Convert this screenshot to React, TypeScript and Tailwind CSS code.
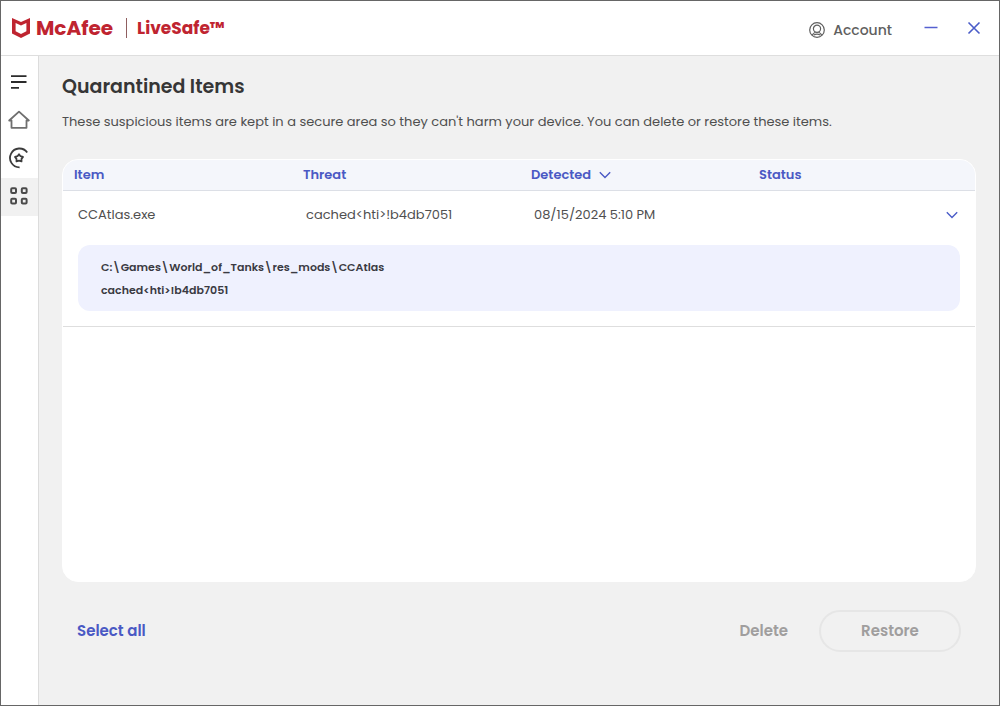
import { useState } from 'react';

const items = [
    {
        name: 'CCAtlas.exe',
        threat: 'cached<hti>!b4db7051',
        detected: '08/15/2024 5:10 PM',
        status: '',
        path: 'C:\\Games\\World_of_Tanks\\res_mods\\CCAtlas',
    },
];

const Chevron = () => (
    <svg viewBox="0 0 12 8" className="w-3 h-2" fill="none" stroke="currentColor" strokeWidth="1.4" aria-hidden="true">
        <path d="M0.8 1.2 L6 6.4 L11.2 1.2" />
    </svg>
)

const TitleBar = () => {
    return (
        <header className="flex h-[55px] items-center justify-between border-b border-[#dedede] bg-white pl-[11px] pr-[17px]">
            <div className="flex items-center text-[#bf2430]">
                <svg viewBox="0 0 18 20" className="h-5 w-[18px]" fill="currentColor" aria-hidden="true">
                    <path fillRule="evenodd" d="M0 0 L9 4 L18 0 V15.5 L9 20 L0 15.5 Z M3.6 5 V13.3 L9 16 L14.4 13.3 V5 L9 7.6 Z" />
                </svg>
                <span className="ml-1.5 text-xl font-bold leading-6">McAfee</span>
                <span className="ml-[13px] h-5 w-px bg-[#8f5f60]"></span>
                <span className="ml-2.5 text-[17px] font-bold leading-6">LiveSafe™</span>
            </div>

            <div className="flex items-center">
                <button className="mt-1 flex items-center gap-2 text-sm font-medium text-[#5f5f5f]">
                    <svg viewBox="0 0 16 16" className="size-4" fill="none" stroke="currentColor" strokeWidth="1.2" aria-hidden="true">
                        <circle cx="8" cy="8" r="7.3" />
                        <circle cx="8" cy="6.8" r="3.6" />
                        <path d="M3.2 13.3 C4 11.2 5.4 10.6 6.4 10.2 M12.8 13.3 C12 11.2 10.6 10.6 9.6 10.2 M4.8 13 C6.8 11.8 9.2 11.8 11.2 13" />
                    </svg>
                    Account
                </button>
                <button aria-label="Minimize" className="ml-8 text-[#5560d0]">
                    <svg viewBox="0 0 14 14" className="size-3.5" stroke="currentColor" strokeWidth="1.5">
                        <path d="M0.5 6.5 H13.5" />
                    </svg>
                </button>
                <button aria-label="Close" className="ml-7 text-[#4a5cc8]">
                    <svg viewBox="0 0 16 16" className="size-4" stroke="currentColor" strokeWidth="1.6">
                        <path d="M2.5 2.5 L13.5 13.5 M13.5 2.5 L2.5 13.5" />
                    </svg>
                </button>
            </div>
        </header>
    )
}

const SideBar = () => {
    const button = 'flex h-[38px] w-full items-center justify-center pb-0.5 pr-0.5';

    return (
        <nav className="flex w-[38px] shrink-0 flex-col border-r border-[#dcdcdc] bg-white pt-2">
            <button aria-label="Menu" className={button}>
                <svg viewBox="0 0 16 14" className="h-3.5 w-4" stroke="#2b2b2b" strokeWidth="1.8">
                    <path d="M0 1.2 H15.5 M0 7 H15.5 M0 12.8 H8" />
                </svg>
            </button>
            <button aria-label="Home" className={button}>
                <svg viewBox="0 0 22 20" className="h-5 w-[22px]" fill="none" stroke="#6f6f6f" strokeWidth="1.8">
                    <path d="M3.5 10.5 H1.2 L11 1.6 L20.8 10.5 H18.5 V17.8 H3.5 Z" strokeLinejoin="round" />
                </svg>
            </button>
            <button aria-label="My Protection" className={button}>
                <svg viewBox="0 0 22 22" className="size-[22px]" fill="none" stroke="#3c3c3c" strokeWidth="1.8">
                    <path d="M19.2 5.6 A9.4 9.4 0 1 0 11.6 20.3" />
                    <path d="M11 7.2 L12.5 9.2 L15 9.9 L13.5 11.9 L13.5 14.4 L11 13.6 L8.5 14.4 L8.5 11.9 L7 9.9 L9.5 9.2 Z" strokeLinejoin="round" />
                </svg>
            </button>
            <button aria-label="My Apps" aria-current="page" className={button + ' bg-[#f1f1f1]'}>
                <svg viewBox="0 0 18 18" className="size-[18px]" fill="none" stroke="#4a4a4a" strokeWidth="2">
                    <rect x="1.2" y="1.2" width="4.8" height="4.8" rx="1" />
                    <rect x="11.8" y="1.2" width="4.8" height="4.8" rx="1" />
                    <rect x="1.2" y="11.8" width="4.8" height="4.8" rx="1" />
                    <rect x="11.8" y="11.8" width="4.8" height="4.8" rx="1" />
                </svg>
            </button>
        </nav>
    )
}

const QuarantineTable = () => {
    const [open, setOpen] = useState(true);

    return (
        <div className="flex-1 overflow-hidden rounded-2xl border border-white bg-white">
            <table className="w-full table-fixed text-left text-[13px] leading-5">
                <thead className="bg-[#f4f6fb] text-[#4a59c4]">
                    <tr className="h-[30px] border-b border-[#dcdfe6]">
                        <th className="pl-[11px] font-semibold">Item</th>
                        <th className="pl-3 font-semibold">Threat</th>
                        <th className="pl-3 font-semibold">
                            <button className="flex items-center gap-2 font-semibold">
                                Detected
                                <Chevron />
                            </button>
                        </th>
                        <th className="pl-3 font-semibold">Status</th>
                    </tr>
                </thead>
                {items.map((item) => (
                    <tbody key={item.name} className="border-b border-[#dedede] text-[#4f4f4f]">
                        <tr className="h-[49px]">
                            <td className="pl-[15px]">{item.name}</td>
                            <td className="pl-[15px]">{item.threat}</td>
                            <td className="pl-[15px]">{item.detected}</td>
                            <td className="pl-[15px] pr-[17px]">
                                <div className="flex items-center justify-between">
                                    <span>{item.status}</span>
                                    <button aria-label="Details" aria-expanded={open} onClick={() => setOpen(!open)} className="text-[#4a5cc8]">
                                        <Chevron />
                                    </button>
                                </div>
                            </td>
                        </tr>
                        {open && (
                            <tr>
                                <td colSpan={4} className="px-[15px] pb-[15px] pt-1.5">
                                    <div className="rounded-xl bg-[#eff1fe] px-[23px] pb-[9px] pt-[11px] text-[11px] font-semibold leading-[23px] text-[#3a3a42]">
                                        <p>{item.path}</p>
                                        <p>{item.threat}</p>
                                    </div>
                                </td>
                            </tr>
                        )}
                    </tbody>
                ))}
            </table>
        </div>
    )
}

const App = () => {
    return (
        <div className="flex min-h-screen flex-col border border-[#666666] bg-[#f1f1f1] font-[Poppins,Inter,sans-serif]">
            <TitleBar />
            <div className="flex flex-1">
                <SideBar />
                <main className="flex flex-1 flex-col px-[23px] pb-[53px] pt-[17px]">
                    <h1 className="text-[19px] font-semibold leading-7 text-[#363636]">Quarantined Items</h1>
                    <p className="mb-[27px] mt-[11px] text-[13px] leading-5 text-[#4f4f4f]">
                        These suspicious items are kept in a secure area so they can't harm your device. You can delete or restore these items.
                    </p>

                    <QuarantineTable />

                    <div className="mt-7 flex items-center justify-between px-[15px] text-[15px] font-semibold">
                        <button className="text-[#4a59c4]">Select all</button>
                        <div className="flex items-center gap-[31px]">
                            <button className="text-[#a09e9e]">Delete</button>
                            <button className="h-[42px] w-[142px] rounded-full border-2 border-[#e6e6e6] text-[#a09e9e]">Restore</button>
                        </div>
                    </div>
                </main>
            </div>
        </div>
    )
}

export default App;
